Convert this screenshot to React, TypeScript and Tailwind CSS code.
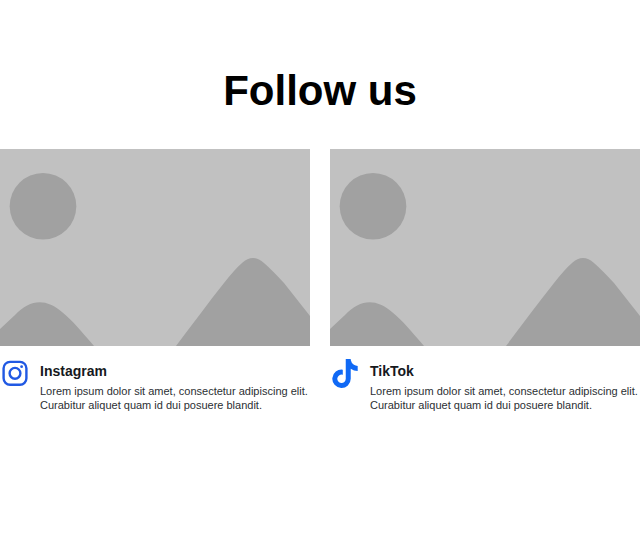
import type { ReactNode } from "react";
import { FaTiktok } from "react-icons/fa6";

function Placeholder({ label }: { label: string }) {
  return (
    <svg viewBox="0 0 310 197" role="img" aria-label={label} className="block w-full bg-[#c1c1c1]">
      <g fill="#a1a1a1">
        <circle cx="43" cy="57.2" r="33.3" />
        <path d="M0 180 L15 166 C30 150 46 149 62 163 C72 171 82 183 94 197 H0Z" />
        <path d="M176 197 C192 176 208 154 224 134 Q235 120 242 114 Q253 104 264 114 Q272 121 284 134 L310 167 V197Z" />
      </g>
    </svg>
  );
}

function InstagramIcon() {
  return (
    <svg viewBox="0 0 30 30" className="size-[30px]" fill="none" stroke="#2159e3" strokeWidth="2.4" aria-hidden="true">
      <rect x="3.6" y="3.9" width="22.8" height="22.8" rx="6.4" />
      <circle cx="15" cy="15.3" r="5.4" />
      <circle cx="21.6" cy="8.7" r="1.4" fill="#2159e3" stroke="none" />
    </svg>
  );
}

function SocialCard({ name, icon }: { name: string; icon: ReactNode }) {
  return (
    <article>
      <Placeholder label={`${name} preview`} />
      <div className="flex gap-[10px] pt-3">
        <div className="flex h-[30px] w-[30px] shrink-0 items-center justify-center">{icon}</div>
        <div className="pt-1">
          <h2 className="text-[14px] leading-[18px] font-bold text-[#16191d]">{name}</h2>
          <p className="pt-1 text-[11px] leading-[14px] text-[#2b2f33]">
            Lorem ipsum dolor sit amet, consectetur adipiscing elit.
            <br />
            Curabitur aliquet quam id dui posuere blandit.
          </p>
        </div>
      </div>
    </article>
  );
}

export default function App() {
  return (
    <main className="min-h-screen bg-white pt-16 font-['Liberation_Sans',Arial,sans-serif]">
      <h1 className="text-center text-[42px] leading-[54px] font-bold text-black">Follow us</h1>
      <section className="grid grid-cols-2 gap-5 pt-[31px]">
        <SocialCard name="Instagram" icon={<InstagramIcon />} />
        <SocialCard name="TikTok" icon={<FaTiktok className="h-[29px] w-[26px] text-[#1069f5]" aria-hidden="true" />} />
      </section>
    </main>
  );
}
